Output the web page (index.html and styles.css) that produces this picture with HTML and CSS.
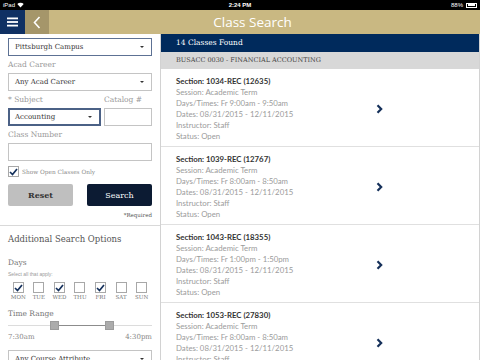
FILE: index.html
```html
<!DOCTYPE html>
<html lang="en">
<head>
  <meta charset="UTF-8" />
  <meta name="viewport" content="width=device-width, initial-scale=1.0" />
  <title>Class Search</title>
  <link rel="stylesheet" href="styles.css">
</head>
<body>
  <div class="status-bar">
    <span class="status-left">iPad
      <svg class="wifi" width="7" height="6" viewBox="0 0 7 6">
        <path d="M3.5 5.6 L0.3 2 A4.6 4.6 0 0 1 6.7 2 Z" fill="#fff" />
      </svg>
    </span>
    <span class="status-time">2:24 PM</span>
    <span class="status-right">88%<span class="battery"><span class="battery-level"></span></span></span>
  </div>

  <header class="top-bar">
    <button class="icon-btn menu-btn">
      <svg width="11" height="10" viewBox="0 0 11 10">
        <rect x="0" y="0.5" width="11" height="1.8" fill="#fff" />
        <rect x="0" y="4.1" width="11" height="1.8" fill="#fff" />
        <rect x="0" y="7.7" width="11" height="1.8" fill="#fff" />
      </svg>
    </button>
    <button class="icon-btn back-btn">
      <svg width="8" height="13" viewBox="0 0 8 13">
        <polyline points="6.5,1 1.5,6.5 6.5,12" fill="none" stroke="#fff" stroke-width="1.6" />
      </svg>
    </button>
    <h1>Class Search</h1>
  </header>

  <main class="layout">
    <aside class="search-panel">
      <form class="search-form">
        <div class="select select-active">
          <span>Pittsburgh Campus</span><span class="caret"></span>
        </div>

        <label class="field-label">Acad Career</label>
        <div class="select">
          <span>Any Acad Career</span><span class="caret"></span>
        </div>

        <div class="field-row">
          <div>
            <label class="field-label">* Subject</label>
            <div class="select select-focus">
              <span>Accounting</span><span class="caret"></span>
            </div>
          </div>
          <div>
            <label class="field-label">Catalog #</label>
            <input class="text-input" />
          </div>
        </div>

        <label class="field-label">Class Number</label>
        <input class="text-input" />

        <div class="check-row">
          <span class="checkbox checked">
            <svg width="9" height="8" viewBox="0 0 9 8"><polyline points="1,4 3.5,6.5 8,1" fill="none" stroke="#14305c" stroke-width="1.7" /></svg>
          </span>
          <span>Show Open Classes Only</span>
        </div>

        <div class="form-buttons">
          <button type="button" class="btn btn-reset">Reset</button>
          <button type="button" class="btn btn-search">Search</button>
        </div>
        <p class="required-note">*Required</p>
      </form>

      <div class="more-options">
        <h2>Additional Search Options</h2>
        <label class="field-label">Days</label>
        <p class="hint">Select all that apply:</p>
        <div class="days" id="days"></div>

        <label class="field-label time-label">Time Range</label>
        <div class="range">
          <span class="range-line range-left"></span>
          <span class="range-handle"></span>
          <span class="range-line range-active"></span>
          <span class="range-handle"></span>
          <span class="range-line range-right"></span>
        </div>
        <div class="range-values">
          <span>7:30am</span><span>4:30pm</span>
        </div>

        <div class="select attribute-select">
          <span>Any Course Attribute</span><span class="caret"></span>
        </div>
      </div>
    </aside>

    <section class="results">
      <div class="results-count">14 Classes Found</div>
      <div class="course-title">BUSACC 0030 - FINANCIAL ACCOUNTING</div>
      <ul class="section-list" id="sectionList"></ul>
    </section>
  </main>

  <script>
    const days = [
      { name: 'MON', on: true }, { name: 'TUE', on: false }, { name: 'WED', on: true },
      { name: 'THU', on: false }, { name: 'FRI', on: true }, { name: 'SAT', on: false },
      { name: 'SUN', on: false }
    ];

    const sections = [
      { id: '1034-REC (12635)', times: 'Fr 9:00am - 9:50am' },
      { id: '1039-REC (12767)', times: 'Fr 8:00am - 8:50am' },
      { id: '1043-REC (18355)', times: 'Fr 1:00pm - 1:50pm' },
      { id: '1053-REC (27830)', times: 'Fr 8:00am - 8:50am' }
    ];

    const check = '<svg width="9" height="8" viewBox="0 0 9 8"><polyline points="1,4 3.5,6.5 8,1" fill="none" stroke="#14305c" stroke-width="1.7" /></svg>';

    document.getElementById('days').innerHTML = days.map(d =>
      `<div class="day"><span class="checkbox">${d.on ? check : ''}</span><span class="day-name">${d.name}</span></div>`
    ).join('');

    document.getElementById('sectionList').innerHTML = sections.map(s => `
      <li class="section-card">
        <div class="section-info">
          <p class="section-name">Section: ${s.id}</p>
          <p>Session: Academic Term</p>
          <p>Days/Times: ${s.times}</p>
          <p>Dates: 08/31/2015 - 12/11/2015</p>
          <p>Instructor: Staff</p>
          <p>Status: Open</p>
        </div>
        <svg class="chevron" width="7" height="10" viewBox="0 0 7 10">
          <polyline points="1.5,1.2 5.2,5 1.5,8.8" fill="none" stroke="#15305a" stroke-width="2.2" />
        </svg>
      </li>`).join('');
  </script>
</body>
</html>
```

FILE: styles.css
```css
* {
  box-sizing: border-box;
}
body {
  margin: 0;
  width: 480px;
  height: 360px;
  overflow: hidden;
  font-family: 'DejaVu Serif', serif;
  background-color: #fff;
  color: #333;
}
p {
  margin: 0;
}

/* device status bar */
.status-bar {
  height: 10px;
  background-color: #000;
  color: #fff;
  font-family: 'Liberation Sans', Arial, sans-serif;
  font-size: 6px;
  display: grid;
  grid-template-columns: 1fr auto 1fr;
  align-items: center;
  padding: 0 3px;
}
.status-left {
  display: flex;
  align-items: center;
  gap: 2px;
}
.status-time {
  font-weight: bold;
}
.status-right {
  display: flex;
  justify-content: flex-end;
  align-items: center;
  gap: 3px;
}
.battery {
  width: 11px;
  height: 5px;
  border: 1px solid #fff;
  padding: 0.5px;
  display: flex;
}
.battery-level {
  width: 88%;
  background-color: #fff;
}

/* app header */
.top-bar {
  height: 24px;
  background-color: #c9b882;
  display: flex;
}
.icon-btn {
  height: 24px;
  width: 25px;
  border: none;
  padding: 0;
  display: flex;
  align-items: center;
  justify-content: center;
}
.menu-btn {
  background-color: #0f3063;
}
.back-btn {
  width: 24px;
  background-color: #a5966a;
}
.top-bar h1 {
  flex: 1;
  margin: 0;
  padding-right: 24px;
  text-align: center;
  font: 400 13.5px/24px 'Open Sans', sans-serif;
  color: #fff;
}

.layout {
  display: flex;
  height: 326px;
  overflow: hidden;
}

/* search form */
.search-panel {
  width: 161px;
  flex-shrink: 0;
  border-right: 1px solid #d2d2d2;
}
.search-form {
  padding: 4px 8px 0;
  border-bottom: 1px solid #d9d9d9;
}
.field-label {
  display: block;
  font-size: 7.5px;
  line-height: 17px;
  color: #9a9a9a;
}
.select {
  height: 18px;
  border: 1px solid #c4c4c4;
  background-color: #fff;
  display: flex;
  align-items: center;
  justify-content: space-between;
  padding: 0 7px 0 6px;
  font-size: 7px;
  color: #333;
}
.select-active {
  border-color: #5d7194;
}
.select-focus {
  border: 2px solid #4b6186;
  padding-left: 5px;
}
.caret {
  width: 0;
  height: 0;
  border-left: 2px solid transparent;
  border-right: 2px solid transparent;
  border-top: 2px solid #333;
}
.text-input {
  display: block;
  width: 100%;
  height: 18px;
  margin: 0;
  border: 1px solid #c4c4c4;
  background-color: #fff;
}
.field-row {
  display: grid;
  grid-template-columns: 93px 48px;
  gap: 3px;
}
.check-row {
  margin-top: 5px;
  display: flex;
  align-items: center;
  gap: 3px;
  font-size: 5.8px;
  color: #8a8a8a;
}
.checkbox {
  width: 11px;
  height: 11px;
  border: 1px solid #a8a8a8;
  background-color: #fff;
  display: flex;
  align-items: center;
  justify-content: center;
}
.form-buttons {
  margin-top: 7px;
  display: flex;
  justify-content: space-between;
}
.btn {
  width: 65px;
  height: 22px;
  border: none;
  border-radius: 2px;
  font-family: 'DejaVu Serif', serif;
  font-size: 8px;
  padding: 0;
}
.btn-reset {
  background-color: #bfbfbf;
  color: #333;
  font-weight: bold;
}
.btn-search {
  background-color: #0c1b33;
  color: #fff;
}
.required-note {
  margin-top: 4px;
  padding-bottom: 5px;
  text-align: right;
  font-size: 5.5px;
  line-height: 10px;
  color: #555;
}

/* additional options */
.more-options {
  padding: 7px 8px 0;
}
.more-options h2 {
  margin: 0 0 8px;
  font-size: 8.5px;
  font-weight: normal;
  line-height: 13px;
  color: #555;
}
.more-options .field-label {
  color: #777;
}
.hint {
  font-family: 'Liberation Sans', Arial, sans-serif;
  font-size: 5px;
  line-height: 6px;
  color: #9a9a9a;
}
.days {
  margin-top: 5px;
  display: grid;
  grid-template-columns: repeat(7, 1fr);
}
.day {
  display: flex;
  flex-direction: column;
  align-items: center;
}
.day-name {
  font-size: 5.5px;
  line-height: 9px;
  color: #777;
}
.more-options .time-label {
  margin-top: 6px;
  line-height: 12px;
}
.range {
  height: 10px;
  display: flex;
  align-items: center;
}
.range-line {
  height: 1px;
  background-color: #dcdcdc;
}
.range-left {
  width: 42px;
}
.range-active {
  width: 46px;
  background-color: #8c8c8c;
}
.range-right {
  flex: 1;
}
.range-handle {
  width: 9px;
  height: 9px;
  background-color: #acacac;
  border: 1px solid #9c9c9c;
}
.range-values {
  margin-top: 2px;
  display: flex;
  justify-content: space-between;
  font-size: 7px;
  line-height: 10px;
  color: #888;
}
.attribute-select {
  margin-top: 8px;
}

/* results */
.results {
  flex: 1;
  border-right: 1px solid #d2d2d2;
  overflow: hidden;
}
.results-count {
  height: 18px;
  padding-left: 15px;
  background-color: #002a5c;
  color: #fff;
  font-size: 7.5px;
  line-height: 18px;
}
.course-title {
  height: 17px;
  padding-left: 15px;
  background-color: #d8d8d8;
  color: #444;
  font-size: 6.5px;
  line-height: 17px;
}
.section-list {
  list-style: none;
  margin: 0;
  padding: 0;
}
.section-card {
  display: flex;
  align-items: center;
  padding: 7px 0 4px 15px;
  border-bottom: 1px solid #e0e0e0;
  font-family: Lato, 'Open Sans', sans-serif;
  font-size: 7.8px;
  line-height: 11px;
  color: #9b9b9b;
}
.section-info {
  width: 200px;
}
.section-name {
  color: #333;
  font-weight: bold;
}
```
